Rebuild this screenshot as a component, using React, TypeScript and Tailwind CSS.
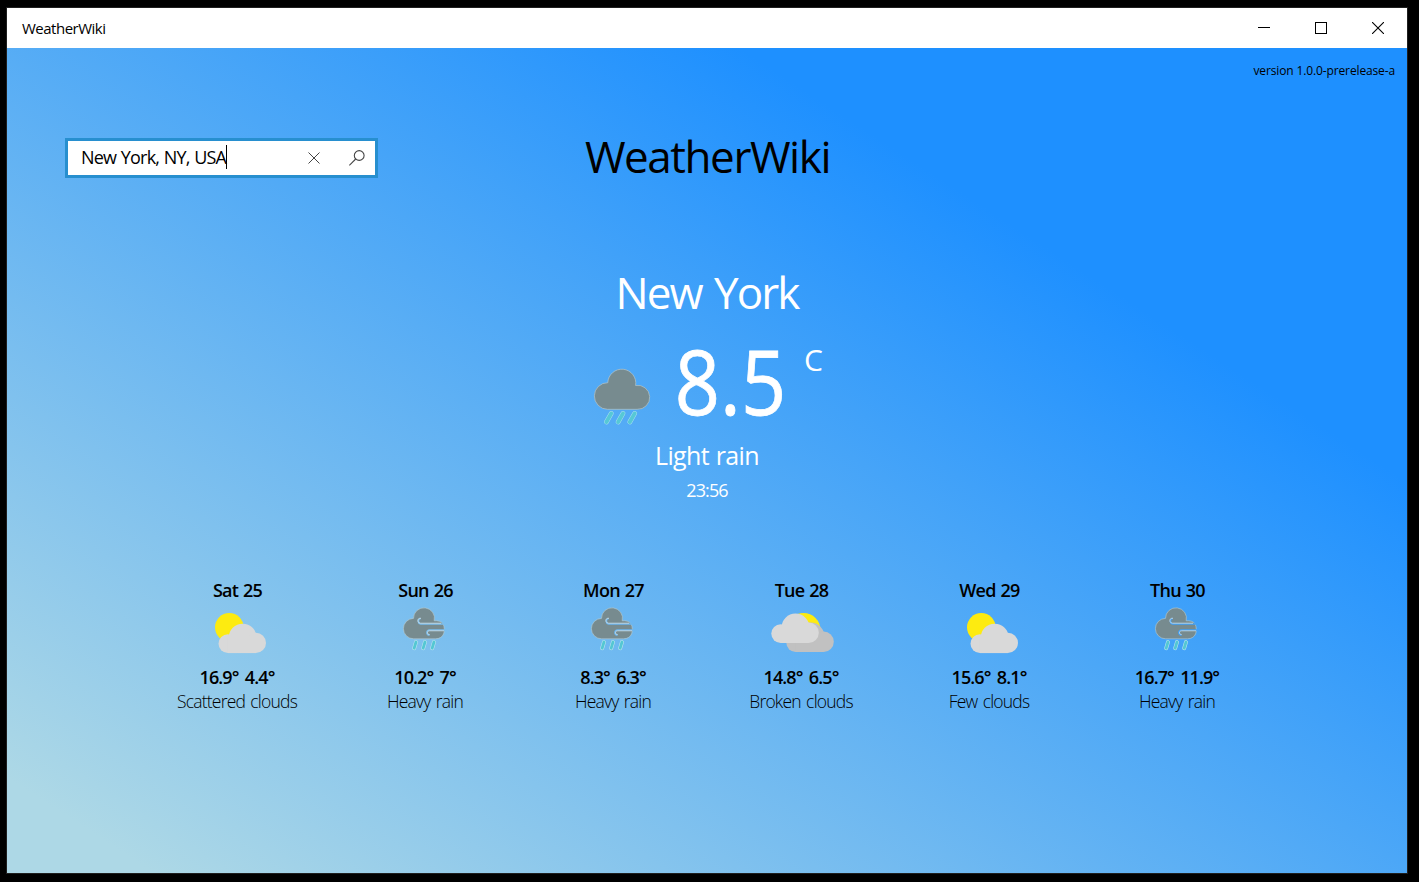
type IconName = "partly" | "storm" | "broken";

interface Forecast {
  day: string;
  icon: IconName;
  temps: string;
  summary: string;
}

const forecasts: Forecast[] = [
  { day: "Sat 25", icon: "partly", temps: "16.9° 4.4°", summary: "Scattered clouds" },
  { day: "Sun 26", icon: "storm", temps: "10.2° 7°", summary: "Heavy rain" },
  { day: "Mon 27", icon: "storm", temps: "8.3° 6.3°", summary: "Heavy rain" },
  { day: "Tue 28", icon: "broken", temps: "14.8° 6.5°", summary: "Broken clouds" },
  { day: "Wed 29", icon: "partly", temps: "15.6° 8.1°", summary: "Few clouds" },
  { day: "Thu 30", icon: "storm", temps: "16.7° 11.9°", summary: "Heavy rain" },
];

function SmallCloud({ x, y, fill }: { x: number; y: number; fill: string }) {
  return (
    <g transform={`translate(${x} ${y})`} fill={fill}>
      <circle cx="9.4" cy="20" r="9.4" />
      <circle cx="24.2" cy="14" r="14" />
      <circle cx="37.3" cy="19.2" r="10.2" />
      <rect x="9.4" y="14" width="28" height="15.4" />
    </g>
  );
}

function PartlyCloudyIcon() {
  return (
    <svg width="75" height="60" viewBox="0 0 75 60">
      <circle cx="29.3" cy="27.3" r="14.3" fill="#fdeb10" />
      <SmallCloud x={18.5} y={23.7} fill="#d9d9d9" />
    </svg>
  );
}

function BrokenCloudsIcon() {
  return (
    <svg width="83" height="60" viewBox="0 0 83 60">
      <circle cx="43.5" cy="30" r="17" fill="#fdeb10" />
      <SmallCloud x={26.3} y={22.6} fill="#c1c1c1" />
      <SmallCloud x={11.3} y={13.6} fill="#d9d9d9" />
    </svg>
  );
}

function StormIcon() {
  return (
    <svg width="71" height="60" viewBox="0 0 71 60" fill="none">
      <defs>
        <mask id="wind">
          <rect width="71" height="60" fill="#fff" />
          <path d="M30.6 18.7c-2.8-.6-3 5 0 5.2H56M39.6 35c-3.600.3-3.600-5 0-4.900H56" stroke="#000" strokeWidth="1.5" />
        </mask>
      </defs>
      <g mask="url(#wind)">
        <path
          d="M23.7 38.800a10.200 10.200 0 1 1-.2-20.400A10.500 10.500 0 1 1 44.200 20.800c3.200-.4 7.400 .4 9 3.300c2.600 6.500 1 14.700-7.700 14.700z"
          fill="#778b8f"
          stroke="#b9cdd0"
          strokeWidth=".6"
        />
      </g>
      <path d="M31 18.300c-4-.8-4.300 4.900-.4 4.900H51M39.600 34.500c-2.800.2-2.800-3.800 0-3.700H54" stroke="#d3e2e8" strokeWidth=".8" />
      <g strokeLinecap="round">
        <path d="M26 42 24.200 48.200M35 42 33.200 48.200M44 42 42.200 48.200" stroke="#bfe7ee" strokeWidth="3.9" />
        <path d="M26 42 24.200 48.200M35 42 33.200 48.200M44 42 42.200 48.200" stroke="#54c7d3" strokeWidth="2.8" />
      </g>
    </svg>
  );
}

function LightRainIcon() {
  return (
    <svg width="75" height="75" viewBox="0 0 75 75" fill="none">
      <path
        d="M22.500 49.300a13.300 13.300 0 1 1 .3-26.600A14 14 0 1 1 50.600 25.500a12 12 0 1 1 1.600 23.800z"
        fill="#778b8f"
        stroke="#b5c5ca"
        strokeWidth=".7"
      />
      <g strokeLinecap="round">
        <path d="M26.300 53.400 21.400 62M38 53.400 33.100 62M49.700 53.400 44.800 62" stroke="#a9dff0" strokeWidth="4.8" />
        <path d="M26.300 53.400 21.400 62M38 53.400 33.100 62M49.700 53.400 44.800 62" stroke="#56c8d6" strokeWidth="3.8" />
      </g>
    </svg>
  );
}

function ForecastIcon({ name }: { name: IconName }) {
  if (name === "partly") return <PartlyCloudyIcon />;
  if (name === "broken") return <BrokenCloudsIcon />;
  return <StormIcon />;
}

function TitleBar() {
  return (
    <header className="flex h-10 items-center justify-between bg-white pr-px pl-[15px] text-black">
      <span className="text-[15px] tracking-[-0.5px]">WeatherWiki</span>
      <div className="flex h-full">
        <button className="flex w-[57px] items-center justify-center" aria-label="Minimize">
          <svg width="12" height="12" fill="none" stroke="#000" shapeRendering="crispEdges">
            <path d="M0 5.5h12" />
          </svg>
        </button>
        <button className="flex w-[57px] items-center justify-center" aria-label="Maximize">
          <svg width="12" height="12" fill="none" stroke="#000" shapeRendering="crispEdges">
            <path d="M.5 .5h11v11H.5z" />
          </svg>
        </button>
        <button className="flex w-[57px] items-center justify-center" aria-label="Close">
          <svg width="12" height="12" fill="none" stroke="#000" strokeWidth="1.1">
            <path d="M0 0l12 12M12 0L0 12" />
          </svg>
        </button>
      </div>
    </header>
  );
}

function SearchBox() {
  return (
    <div className="flex h-10 w-[313px] items-center border-[3px] border-[#278fcf] bg-white pl-[13px] text-black">
      <span className="pb-[2px] text-[18px] leading-6 tracking-[-0.8px] whitespace-nowrap [word-spacing:0.7px]">New York, NY, USA</span>
      <span className="mb-[2px] h-6 w-px bg-black" />
      <svg className="ml-auto" width="12" height="12" fill="none" stroke="#444" strokeWidth="1">
        <path d="M.5 .5l11 11M11.5 .5l-11 11" />
      </svg>
      <svg className="mr-[10px] mb-px ml-[29px]" width="16" height="16" fill="none" stroke="#444" strokeWidth="1.1">
        <circle cx="10.2" cy="5.5" r="4.9" />
        <path d="M6.700 9 .3 15.400" />
      </svg>
    </div>
  );
}

export default function App() {
  return (
    <div className="h-[882px] w-[1419px] overflow-hidden bg-black pt-2 pl-[7px] font-['Open_Sans','Noto_Sans',sans-serif]">
      <div className="flex h-[865px] w-[1400px] flex-col ring-1 ring-[#1f1f1f]">
        <TitleBar />
        <main className="flex flex-1 flex-col bg-[linear-gradient(33deg,#add8e6_5.5%,#1e90ff_75%)]">
          <div className="flex h-11 items-center justify-end pt-[2px] pr-[12px] text-[12px] tracking-[-0.13px] text-black">
            version 1.0.0-prerelease-a
          </div>

          <div className="mt-[46px] grid h-10 grid-cols-[313px_1fr_313px] items-center px-[58px]">
            <SearchBox />
            <h1 className="pb-[3px] pl-px text-center text-[44px] leading-[37px] tracking-[-1.45px] text-black">WeatherWiki</h1>
          </div>

          <section className="mt-[84px] flex flex-col items-center text-white">
            <h2 className="flex h-[60px] items-center text-[44px] tracking-[-1.95px] [word-spacing:3px]">New York</h2>
            <div className="flex h-[118px] w-[244px]">
              <div className="pt-[38px]">
                <LightRainIcon />
              </div>
              <span className="ml-[7px] w-[127px] origin-center scale-x-[0.89] text-center text-[89px] leading-[118px] [-webkit-text-stroke:0.8px_white]">8.5</span>
              <span className="ml-[10px] pt-[18px] text-[30px] leading-10">C</span>
            </div>
            <p className="h-[30px] text-[25px] leading-[30px] tracking-[-0.65px] [word-spacing:1px]">Light rain</p>
            <p className="h-10 text-[18px] leading-10 tracking-[-0.9px]">23:56</p>
          </section>

          <section className="mt-[70px] flex justify-center text-black">
            {forecasts.map((f) => (
              <article key={f.day} className="flex w-[188px] flex-col items-center whitespace-nowrap">
                <h3 className="pl-px text-[18px] leading-5 font-semibold tracking-[-0.75px] [word-spacing:1px]">{f.day}</h3>
                <ForecastIcon name={f.icon} />
                <p className="mt-[5px] text-[18px] leading-6 font-semibold tracking-[-0.9px] [word-spacing:2.5px]">{f.temps}</p>
                <p className="text-[17.5px] leading-6 font-light tracking-[-0.8px] [word-spacing:1.5px]">{f.summary}</p>
              </article>
            ))}
          </section>
        </main>
      </div>
    </div>
  );
}
